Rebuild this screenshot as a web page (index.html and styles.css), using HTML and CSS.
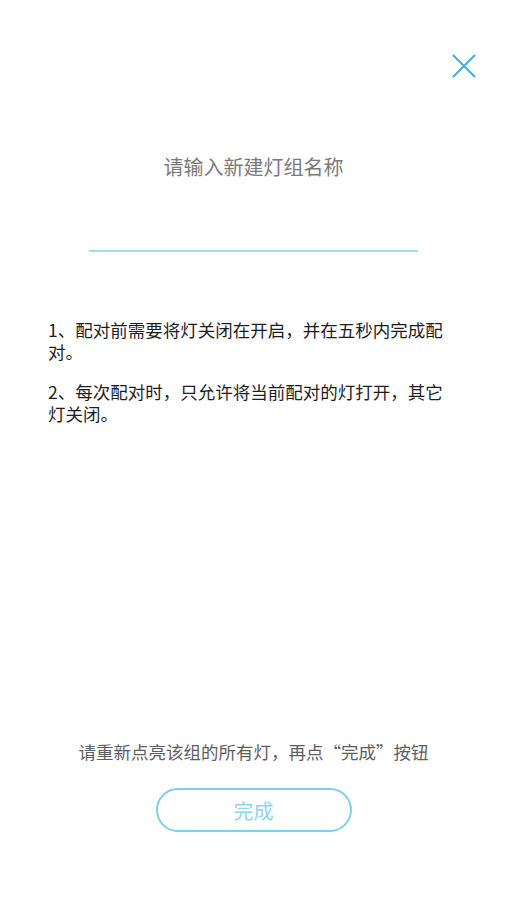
FILE: index.html
```html
<!DOCTYPE html>
<html lang="zh-CN">
  <head>
    <meta charset="UTF-8" />
    <meta name="viewport" content="width=device-width, initial-scale=1.0" />
    <title>新建灯组</title>
    <link rel="stylesheet" href="styles.css">
  </head>
  <body>
    <div class="page">
      <header>
        <button class="close" type="button" aria-label="关闭">
          <svg viewBox="0 0 24 24" width="24" height="24">
            <path d="M1 1 L23 23 M23 1 L1 23" />
          </svg>
        </button>
      </header>

      <section class="name">
        <h1>请输入新建灯组名称</h1>
        <div class="field">
          <input type="text" class="name-input" />
        </div>
      </section>

      <!-- 配对说明 -->
      <section class="tips">
        <p>1、配对前需要将灯关闭在开启，并在五秒内完成配对。</p>
        <p>2、每次配对时，只允许将当前配对的灯打开，其它灯关闭。</p>
      </section>

      <footer>
        <p class="hint">请重新点亮该组的所有灯，再点“完成”按钮</p>
        <button class="done" type="button">完成</button>
      </footer>
    </div>
  </body>
</html>
```

FILE: styles.css
```css
* {
  box-sizing: border-box;
  margin: 0;
  padding: 0;
}

body {
  font-family: "Noto Sans CJK SC", "Noto Sans", sans-serif;
  background-color: #fff;
  color: #222;
}

.page {
  display: flex;
  flex-direction: column;
  min-height: 100vh;
}

header {
  display: flex;
  justify-content: flex-end;
  padding: 44px 21px 0;
}

.close {
  width: 44px;
  height: 44px;
  display: flex;
  align-items: center;
  justify-content: center;
  border: none;
  background: none;
  cursor: pointer;
}

.close svg path {
  fill: none;
  stroke: #3eaee0;
  stroke-width: 2;
}

.name {
  display: flex;
  flex-direction: column;
  align-items: center;
  margin-top: 65px;
}

.name h1 {
  font-size: 20px;
  line-height: 28px;
  font-weight: normal;
  color: #7a7a7a;
}

.field {
  width: 329px;
  margin-top: 29px;
  border-bottom: 2px solid #a6dbf4;
}

.name-input {
  display: block;
  width: 100%;
  height: 40px;
  appearance: none;
  border: none;
  background: transparent;
  outline: none;
  font-size: 18px;
  text-align: center;
  font-family: inherit;
}

.tips {
  margin-top: 67px;
  padding: 0 48px;
}

.tips p {
  font-size: 17.5px;
  line-height: 22px;
  margin-bottom: 18px;
  color: #1e1e1e;
}

footer {
  margin-top: auto;
  display: flex;
  flex-direction: column;
  align-items: center;
  padding-bottom: 68px;
}

.hint {
  font-size: 17.5px;
  line-height: 24px;
  color: #5e5e5e;
}

.done {
  width: 196px;
  height: 44px;
  margin-top: 24px;
  border: 2px solid #80cdec;
  border-radius: 22px;
  background: #fff;
  color: #8ed3f0;
  font-size: 20px;
  font-family: inherit;
  cursor: pointer;
}
```
